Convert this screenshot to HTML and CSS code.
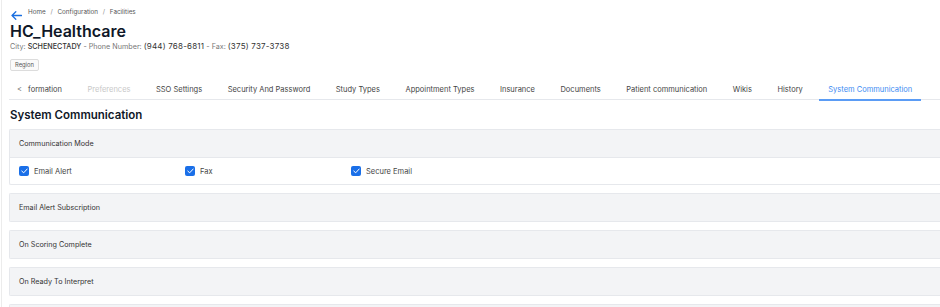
FILE: index.html
```html
<!DOCTYPE html>
<html>
<head>
<meta charset="utf-8">
<link rel="stylesheet" href="styles.css">
</head>
<body>
<div class="page">
  <div class="crumbs-row">
    <svg class="back" width="11" height="9" viewBox="0 0 11 9"><path d="M10.5 4.5H1M4.8 0.8L1 4.5l3.8 3.7" fill="none" stroke="#1a6fe0" stroke-width="1.3" stroke-linecap="round" stroke-linejoin="round"/></svg>
    <div class="crumbs">Home <span class="sep">/</span> Configuration <span class="sep">/</span> Facilities</div>
  </div>
  <h1 class="title">HC_Healthcare</h1>
  <div class="sub">City: <b>SCHENECTADY</b> - Phone Number: <span class="num">(944) 768-6811</span> - Fax: <span class="num">(375) 737-3738</span></div>
  <div class="badge">Region</div>

  <div class="tabs">
    <div class="tab first"><span class="chev">&lt;</span> formation</div>
    <div class="tab disabled">Preferences</div>
    <div class="tab">SSO Settings</div>
    <div class="tab">Security And Password</div>
    <div class="tab">Study Types</div>
    <div class="tab">Appointment Types</div>
    <div class="tab">Insurance</div>
    <div class="tab">Documents</div>
    <div class="tab">Patient communication</div>
    <div class="tab">Wikis</div>
    <div class="tab">History</div>
    <div class="tab active">System Communication</div>
  </div>

  <h2 class="heading">System Communication</h2>

  <div class="card">
    <div class="card-head">Communication Mode</div>
    <div class="card-body">
      <label class="check"><span class="box"><svg width="7" height="6" viewBox="0 0 7 6"><path d="M0.8 3.1L2.7 4.8 6.2 1" fill="none" stroke="#fff" stroke-width="1" stroke-linecap="round" stroke-linejoin="round"/></svg></span>Email Alert</label>
      <label class="check"><span class="box"><svg width="7" height="6" viewBox="0 0 7 6"><path d="M0.8 3.1L2.7 4.8 6.2 1" fill="none" stroke="#fff" stroke-width="1" stroke-linecap="round" stroke-linejoin="round"/></svg></span>Fax</label>
      <label class="check"><span class="box"><svg width="7" height="6" viewBox="0 0 7 6"><path d="M0.8 3.1L2.7 4.8 6.2 1" fill="none" stroke="#fff" stroke-width="1" stroke-linecap="round" stroke-linejoin="round"/></svg></span>Secure Email</label>
    </div>
  </div>
  <div class="card"><div class="card-head">Email Alert Subscription</div></div>
  <div class="card"><div class="card-head">On Scoring Complete</div></div>
  <div class="card"><div class="card-head">On Ready To Interpret</div></div>
  <div class="card"><div class="card-head">&nbsp;</div></div>
</div>
</body>
</html>
```

FILE: styles.css
```css
html, body {
  margin: 0;
  padding: 0;
  background: #fff;
  overflow: hidden;
}
body {
  width: 940px;
  height: 307px;
  font-family: "Inter", "Noto Sans", sans-serif;
  color: #333;
}
.page {
  border-left: 1px solid #ececec;
  margin-left: 1px;
  padding-left: 7px;
  height: 307px;
  box-sizing: border-box;
}
.crumbs-row {
  display: flex;
  align-items: center;
  gap: 6px;
  padding-top: 7px;
  height: 10px;
}
.back {
  margin-left: 2px;
  margin-top: 6px;
}
.crumbs {
  font-size: 6.3px;
  color: #555;
  margin-top: -1px;
}
.crumbs .sep {
  margin: 0 3px;
  color: #888;
}
.title {
  margin: 6px 0 0 1px;
  font-size: 16px;
  line-height: 16px;
  font-weight: 600;
  color: #101828;
}
.sub {
  margin: 2px 0 0 1px;
  font-size: 7.2px;
  line-height: 10px;
  color: #777;
}
.sub b {
  font-weight: 500;
  color: #333;
}
.sub .num {
  font-size: 8px;
  color: #333;
  letter-spacing: 0.2px;
}
.badge {
  width: fit-content;
  margin: 7px 0 0 1px;
  font-size: 5.8px;
  line-height: 10px;
  padding: 0 4px;
  border: 1px solid #dcdcdc;
  border-radius: 2px;
  color: #555;
  background: #fafafa;
}
.tabs {
  display: flex;
  margin-top: 10px;
  border-bottom: 1px solid #e6e8ec;
  height: 18px;
  width: 950px;
  font-size: 7.5px;
  color: #444;
  white-space: nowrap;
}
.tab {
  padding: 4px 9px 0 9px;
  margin-right: 7.5px;
  height: 14px;
  line-height: 10px;
}
.tab.first {
  padding-left: 8px;
}
.chev {
  color: #777;
  margin-right: 4px;
}
.tab.disabled {
  color: #c8c8c8;
}
.tab.active {
  color: #3d8bf2;
  border-bottom: 2px solid #5b9cf5;
}
.heading {
  margin: 8px 0 7px 1px;
  font-size: 11.5px;
  line-height: 14px;
  font-weight: 600;
  color: #101828;
}
.card {
  border: 1px solid #e6e8ec;
  border-right: none;
  margin-bottom: 8px;
  width: 960px;
  border-radius: 2px 0 0 2px;
}
.card-head {
  background: #f3f4f6;
  height: 27px;
  line-height: 27px;
  padding-left: 9px;
  font-size: 7.2px;
  color: #333;
}
.card-body {
  border-top: 1px solid #e6e8ec;
  display: grid;
  grid-template-columns: 166px 166px 166px;
  height: 26px;
  align-items: center;
  padding-left: 9px;
}
.check {
  display: flex;
  align-items: center;
  font-size: 7.5px;
  color: #444;
}
.box {
  width: 10px;
  height: 10px;
  border-radius: 2px;
  background: #1a6fe8;
  display: inline-flex;
  align-items: center;
  justify-content: center;
  margin-right: 5px;
}
```
